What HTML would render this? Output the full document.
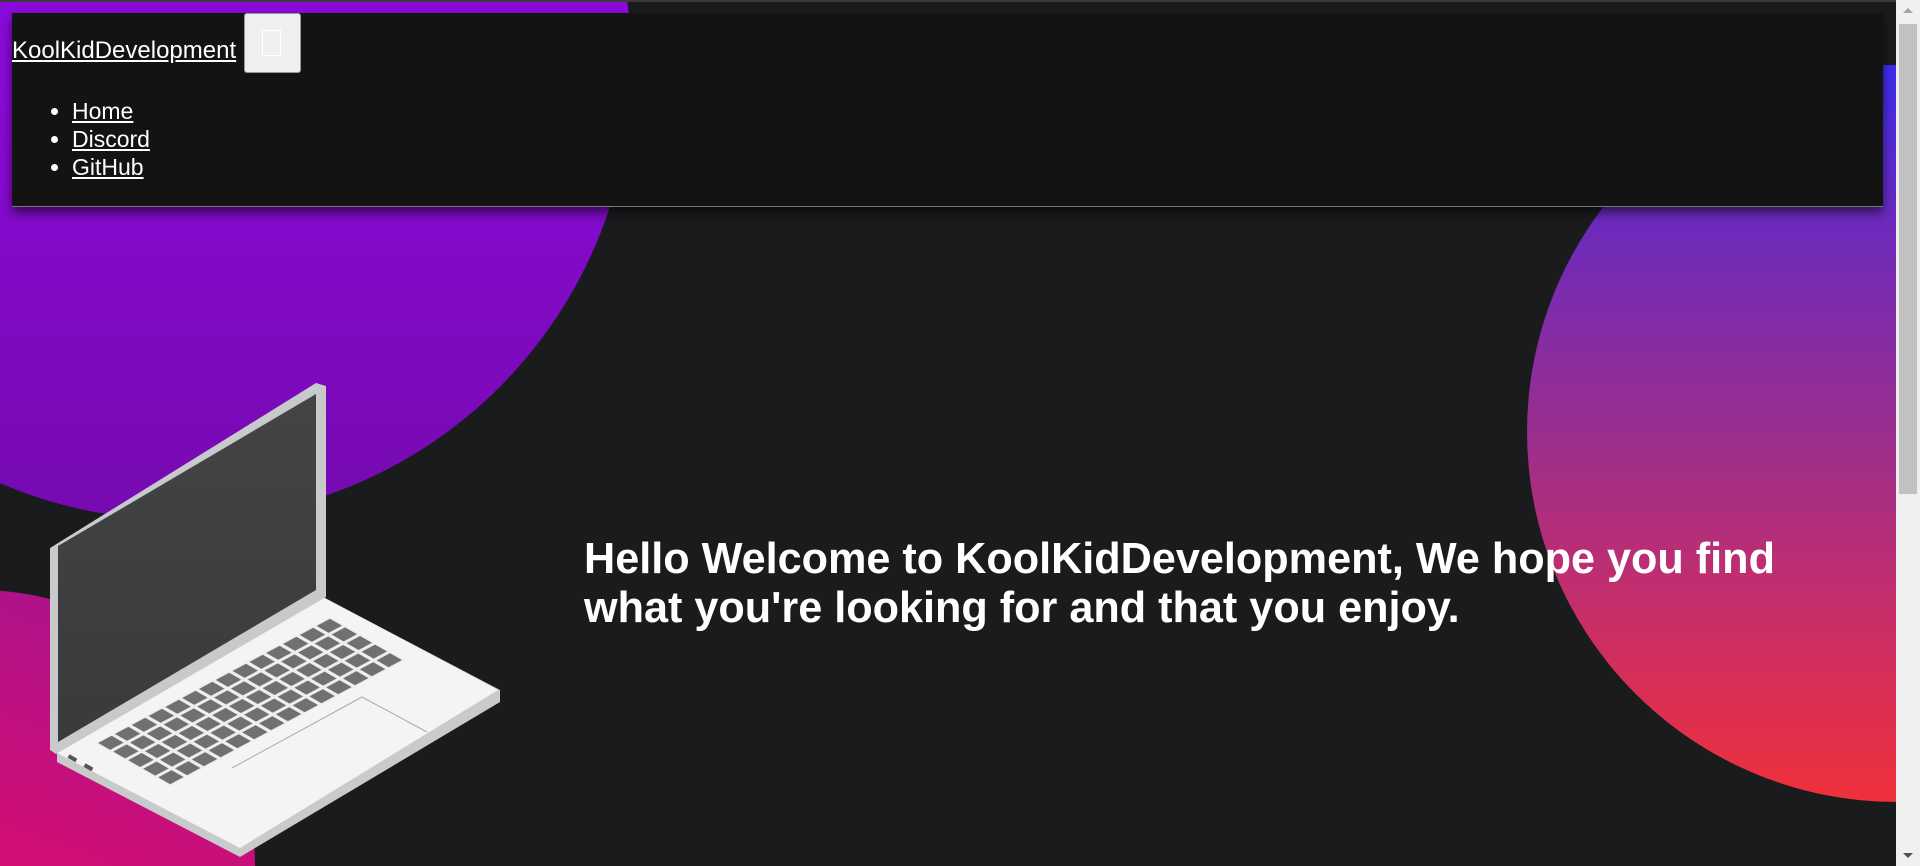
<!DOCTYPE html>
<html><head><meta charset="utf-8"><style>
html,body{margin:0;padding:0;width:1920px;height:866px;overflow:hidden;}
body{background:#1a1b1d;position:relative;font-family:"Liberation Sans",Arial,sans-serif;}
.clip{position:absolute;left:0;top:0;width:1896px;height:866px;overflow:hidden;}
.c1{position:absolute;left:-274px;top:-386px;width:906px;height:906px;border-radius:50%;background:linear-gradient(180deg,#8d0ae8 0%,#8a0ad8 50%,#760ab0 100%);}
.c2{position:absolute;left:-295px;top:590px;width:550px;height:550px;border-radius:50%;background:linear-gradient(200deg,#a4148f 0%,#e80a68 70%);}
.c3{position:absolute;left:1527px;top:62px;width:740px;height:740px;border-radius:50%;background:linear-gradient(180deg,#3d2cf0 0%,#6a2ac0 20%,#9a2e8e 50%,#c82e68 75%,#f0303a 100%);}
.topstrip{position:absolute;left:0;top:0;width:1896px;height:2px;background:#3a3b3d;}
.rstrip{position:absolute;left:1883px;top:0;width:20px;height:65px;background:#1a1b1d;}
.sb{position:absolute;right:0;top:0;width:24px;height:866px;background:#f0f0f0;}
.sb .th{position:absolute;left:3px;top:24px;width:18px;height:470px;background:#c1c1c1;}
.sb .up{position:absolute;left:7px;top:8px;border-left:5px solid transparent;border-right:5px solid transparent;border-bottom:5px solid #a3a3a3;}
.sb .dn{position:absolute;left:7px;bottom:8px;border-left:5px solid transparent;border-right:5px solid transparent;border-top:5px solid #505050;}
nav{position:absolute;left:12px;top:13px;width:1871px;height:193px;background:#131313;border-bottom:1px solid #777;box-shadow:0 6px 10px rgba(0,0,0,.55);}
.brand{position:absolute;left:0;top:24px;color:#fff;font-size:24px;text-decoration:underline;}
.btn{position:absolute;left:232px;top:0;width:57px;height:60px;background:#efefef;border:1px solid #999;border-radius:3px;box-sizing:border-box;}
.btn i{position:absolute;left:17px;top:16px;width:19px;height:26px;border:1px solid #fff;box-sizing:border-box;}
ul{position:absolute;left:0;top:84px;margin:0;padding:0 0 0 60px;color:#fff;font-size:23px;line-height:28px;}
ul a{color:#fff;text-decoration:underline;}
h1{position:absolute;left:584px;top:535px;margin:0;color:#fff;font-size:43.2px;font-weight:bold;line-height:49px;width:1250px;}
</style></head><body>
<div class="clip">
<div class="c1"></div><div class="c2"></div><div class="c3"></div>
<div class="rstrip"></div><div class="topstrip"></div>
<svg style="position:absolute;left:0;top:370px" width="520" height="496" viewBox="0 370 520 496">
<defs>
<pattern id="kp" patternUnits="userSpaceOnUse" width="1" height="1" patternTransform="matrix(16.8 -9 15 8.6 95 743)">
<rect width="1" height="1" fill="#efefef"/><rect x="0.1" y="0.1" width="0.8" height="0.8" fill="#6f706f"/></pattern>
<linearGradient id="scr" x1="0" y1="0" x2="0" y2="1"><stop offset="0" stop-color="#434446"/><stop offset="1" stop-color="#383a3c"/></linearGradient>
</defs>
<polygon points="57,753 323,597 500,690 500,702 240,857 57,762" fill="#c9cacb"/>
<polygon points="57,753 323,597 498,690 240,848" fill="#f4f4f4"/>
<polygon points="50,548 316,383 326,386 326,597 56,754 50,750" fill="#c8c9ca"/>
<polygon points="58,546 316,394 316,590 58,742" fill="url(#scr)"/>
<polygon points="95,743 330,617 405,660 170,786" fill="url(#kp)"/>
<polyline points="232,768 362,697 427,732" fill="none" stroke="#aaa" stroke-width="1"/>
<rect x="68" y="756" width="9" height="4" fill="#555" transform="rotate(30 72 758)"/>
<rect x="84" y="765" width="9" height="4" fill="#555" transform="rotate(30 88 767)"/>
</svg>
<nav>
<a class="brand">KoolKidDevelopment</a>
<div class="btn"><i></i></div>
<ul><li><a>Home</a></li><li><a>Discord</a></li><li><a>GitHub</a></li></ul>
</nav>
<h1>Hello Welcome to KoolKidDevelopment, We hope you find what you're looking for and that you enjoy.</h1>
</div>
<div class="sb"><div class="up"></div><div class="th"></div><div class="dn"></div></div>
</body></html>
